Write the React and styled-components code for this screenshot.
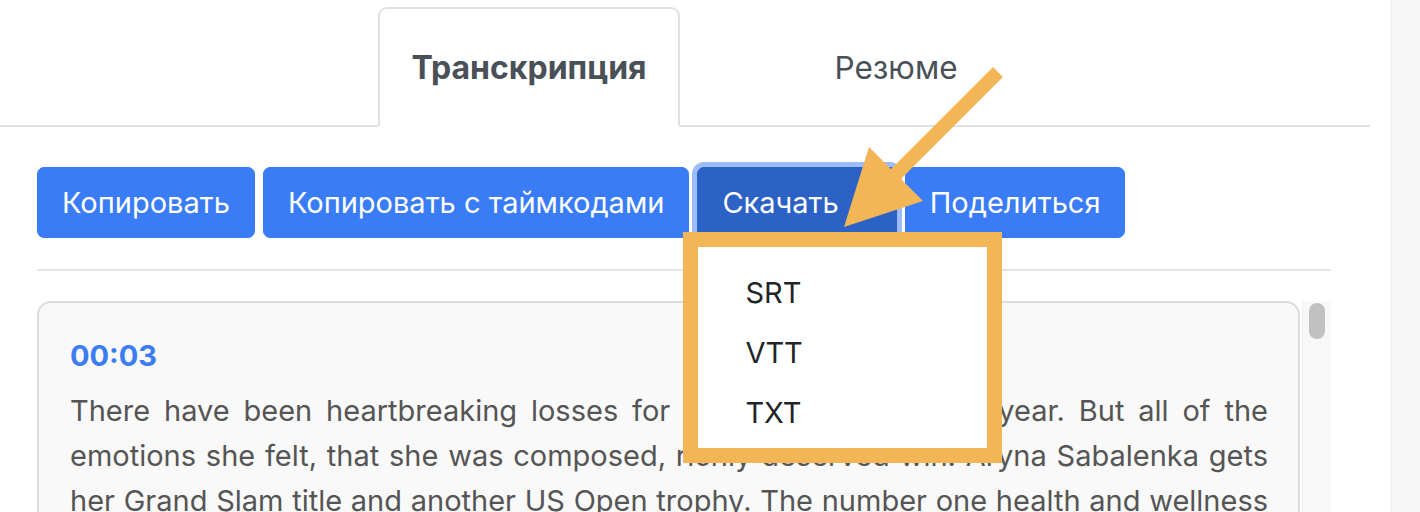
import styled, { createGlobalStyle } from "styled-components";

const GlobalStyle = createGlobalStyle`
  html, body {
    margin: 0;
    padding: 0;
    height: 100%;
    overflow: hidden;
    background: #fff;
  }
  body {
    font-family: Inter, "Noto Sans", sans-serif;
    -webkit-font-smoothing: antialiased;
  }
  * {
    box-sizing: border-box;
  }
`;

const Page = styled.div`
  position: relative;
  display: flex;
  width: 1420px;
  height: 512px;
  overflow: hidden;
`;

const Main = styled.main`
  flex: 1;
  min-width: 0;
`;

const Gutter = styled.aside`
  width: 30px;
  background: #f7f7f7;
  box-shadow: inset 4px 0 4px -3px rgba(0, 0, 0, 0.04);
`;

const TabBar = styled.nav`
  display: flex;
  margin-right: 20px;
  padding: 7px 0 0 378px;
  border-bottom: 2px solid #dee2e6;
`;

const Tab = styled.button`
  width: ${(p) => p.$width}px;
  height: 120px;
  margin-bottom: -2px;
  padding: 0;
  border: 2px solid ${(p) => (p.$active ? "#dee2e6" : "transparent")};
  border-bottom-color: ${(p) => (p.$active ? "#fff" : "transparent")};
  border-radius: 9px 9px 0 0;
  background: ${(p) => (p.$active ? "#fff" : "transparent")};
  font-family: Inter, sans-serif;
  font-size: ${(p) => (p.$active ? 32 : 31.5)}px;
  font-weight: ${(p) => (p.$active ? 700 : 400)};
  color: #495057;
  cursor: pointer;
`;

const Content = styled.section`
  padding: 40px 59px 0 37px;
`;

const Toolbar = styled.div`
  display: flex;
  gap: 8px;
`;

const ButtonWrap = styled.div`
  position: relative;
`;

const Button = styled.button`
  display: flex;
  align-items: center;
  padding: 12px 24px;
  border: 1px solid ${(p) => (p.$pressed ? "#2c62c6" : "#3a7cf6")};
  border-radius: 7px;
  background: ${(p) => (p.$pressed ? "#2c62c6" : "#3a7cf6")};
  box-shadow: ${(p) =>
    p.$pressed ? "0 0 0 5px rgba(58, 124, 246, 0.5)" : "none"};
  font-family: Inter, sans-serif;
  font-size: 29px;
  line-height: 45px;
  color: #fff;
  white-space: nowrap;
  cursor: pointer;
`;

const Caret = styled.span`
  margin-left: 15px;
  border-top: 9px solid #fff;
  border-left: 9px solid transparent;
  border-right: 9px solid transparent;
`;

const Menu = styled.ul`
  position: absolute;
  top: calc(100% - 6px);
  left: -14px;
  z-index: 3;
  width: 319px;
  margin: 0;
  padding: 15px 0 6px;
  list-style: none;
  background: #fff;
  border: 15px solid #f2b657;
`;

const MenuItem = styled.li`
  padding: 7.5px 47px;
  font-size: 29px;
  line-height: 45px;
  color: #212529;
`;

const Divider = styled.hr`
  margin: 31px 0 30px;
  border: 0;
  border-top: 2px solid #e4e4e4;
`;

const Viewer = styled.div`
  display: flex;
  align-items: flex-start;
  gap: 2px;
  height: 230px;
  overflow: hidden;
`;

const Card = styled.article`
  flex: 1;
  min-width: 0;
  padding: 30px 30px 30px 31px;
  border: 2px solid #dcdcdc;
  border-radius: 14px;
  background: #f9f9f9;
`;

const Track = styled.div`
  align-self: stretch;
  width: 29px;
  padding: 2px 6px 0 6px;
  background: #f8f8f8;
  border-left: 1px solid #ececec;
`;

const Thumb = styled.div`
  height: 36px;
  border-radius: 8px;
  background: #c1c1c1;
`;

const Segment = styled.div`
  & + & {
    margin-top: 30px;
  }
`;

const Time = styled.div`
  margin-bottom: 10px;
  font-size: 29px;
  font-weight: 700;
  line-height: 45px;
  color: #3b7cf2;
`;

const Text = styled.p`
  margin: 0;
  font-size: 29px;
  line-height: 45px;
  color: #555;
  text-align: justify;
`;

const Overlay = styled.svg`
  position: absolute;
  top: 0;
  left: 0;
  z-index: 5;
  pointer-events: none;
`;

const segments = [
  {
    time: "00:03",
    text: "There have been heartbreaking losses for Aryna Sabalenka this year. But all of the emotions she felt, that she was composed, richly deserved win! Aryna Sabalenka gets her Grand Slam title and another US Open trophy. The number one health and wellness company in the world is a proud partner of the US Open, celebrating every champion.",
  },
  {
    time: "00:18",
    text: "She came back from a set down in the final, and the crowd here in Arthur Ashe Stadium was behind her from the very first point. It was a night of big serves, long rallies and a lot of nerves on both sides of the net, but in the end she found her best tennis exactly when she needed it.",
  },
  {
    time: "00:34",
    text: "Last year she stood on this court as the runner-up and promised that she would come back stronger. Tonight she kept that promise. Her coach said after the match that the work they did in the off-season on her movement and her second serve made all the difference in the decisive moments.",
  },
];

const tabs = [
  { label: "Транскрипция", width: 302, active: true },
  { label: "Резюме", width: 432 },
];

export default function App() {
  return (
    <>
      <GlobalStyle />
      <Page>
        <Main>
          <TabBar>
            {tabs.map((t) => (
              <Tab key={t.label} $width={t.width} $active={t.active}>
                {t.label}
              </Tab>
            ))}
          </TabBar>
          <Content>
            <Toolbar>
              <Button>Копировать</Button>
              <Button>Копировать с таймкодами</Button>
              <ButtonWrap>
                <Button $pressed>
                  Скачать
                  <Caret />
                </Button>
                <Menu>
                  <MenuItem>SRT</MenuItem>
                  <MenuItem>VTT</MenuItem>
                  <MenuItem>TXT</MenuItem>
                </Menu>
              </ButtonWrap>
              <Button>Поделиться</Button>
            </Toolbar>
            <Divider />
            <Viewer>
              <Card>
                {segments.map((s) => (
                  <Segment key={s.time}>
                    <Time>{s.time}</Time>
                    <Text>{s.text}</Text>
                  </Segment>
                ))}
              </Card>
              <Track>
                <Thumb />
              </Track>
            </Viewer>
          </Content>
        </Main>
        <Gutter />
        <Overlay width="1420" height="512" viewBox="0 0 1420 512">
          <line
            x1="998"
            y1="72"
            x2="893"
            y2="177"
            stroke="#f2b657"
            strokeWidth="14"
          />
          <polygon points="869,147 923,201 844,227" fill="#f2b657" />
        </Overlay>
      </Page>
    </>
  );
}
